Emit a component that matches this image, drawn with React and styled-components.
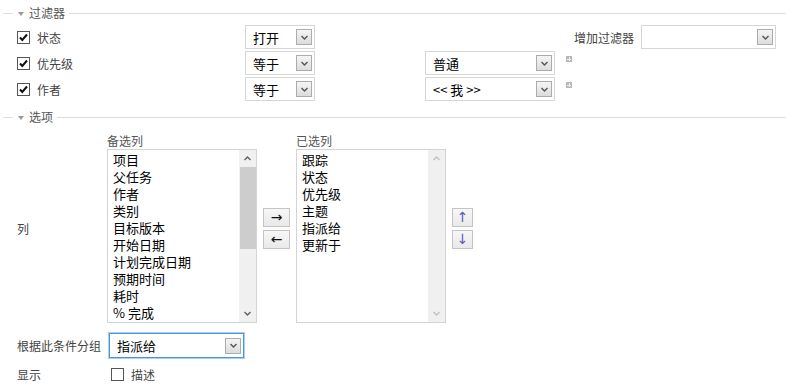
import styled, { createGlobalStyle } from 'styled-components';

const GlobalStyle = createGlobalStyle`
  html, body { margin: 0; padding: 0; background: #fff; }
  body {
    font-family: "Noto Sans CJK SC", "DejaVu Sans", sans-serif;
    font-size: 12px;
    color: #444;
  }
`;

const Page = styled.div`
  width: 786px;
  height: 386px;
  overflow: hidden;
`;

const Legend = styled.div`
  display: flex;
  align-items: center;
  height: 14px;
  margin-top: ${p => p.$top}px;
  padding-left: 3px;
  color: #555;
  line-height: 14px;
  &::before { content: ""; width: 10px; height: 1px; background: #dcdcdc; }
  &::after { content: ""; flex: 1; height: 1px; background: #dcdcdc; margin-left: 4px; }
`;

const Toggle = styled.span`
  width: 0;
  height: 0;
  margin: 1px 5px 0 5px;
  border-left: 3px solid transparent;
  border-right: 3px solid transparent;
  border-top: 4px solid #999;
`;

const FilterRows = styled.div`
  display: flex;
  flex-direction: column;
  gap: 2px;
  margin-top: 5px;
`;

const Row = styled.div`
  display: flex;
  align-items: center;
  height: 24px;
  padding-left: 17px;
`;

const CheckCell = styled.div`
  width: 228px;
  display: flex;
  align-items: center;
  gap: 7px;
`;

const OpCell = styled.div`
  width: 180px;
  display: flex;
`;

const ValueCell = styled.div`
  display: flex;
  align-items: center;
`;

const Box = styled.span`
  width: 13px;
  height: 13px;
  box-sizing: border-box;
  border: 1px solid #555;
  background: #fff;
  display: inline-flex;
  align-items: center;
  justify-content: center;
`;

const CheckBox = ({ checked }) => (
  <Box>
    {checked && (
      <svg width="9" height="9" viewBox="0 0 9 9">
        <path d="M1 4.5 L3.3 7 L8 1.5" fill="none" stroke="#111" strokeWidth="2" />
      </svg>
    )}
  </Box>
);

const SelectBox = styled.div`
  width: ${p => p.$w}px;
  height: ${p => p.$h || 24}px;
  box-sizing: border-box;
  border: 1px solid ${p => (p.$focus ? '#4a95dc' : '#d6d6d6')};
  box-shadow: ${p => (p.$focus ? '0 0 0 1px #a9d0f3' : 'none')};
  background: #fff;
  display: flex;
  align-items: center;
  justify-content: space-between;
  padding: 0 2px 0 7px;
  font-size: 13px;
  color: #000;
`;

const DropBtn = styled.span`
  width: 16px;
  height: 16px;
  box-sizing: border-box;
  border: 1px solid #acacac;
  background: linear-gradient(#f5f5f5, #dcdcdc);
  display: inline-flex;
  align-items: center;
  justify-content: center;
`;

const Chevron = ({ color = '#555', up }) => (
  <svg width="7" height="5" viewBox="0 0 7 5">
    <path d={up ? 'M0.5 4 L3.5 1 L6.5 4' : 'M0.5 1 L3.5 4 L6.5 1'} fill="none" stroke={color} strokeWidth="1.4" />
  </svg>
);

const Select = ({ w, h, focus, children }) => (
  <SelectBox $w={w} $h={h} $focus={focus}>
    <span>{children}</span>
    <DropBtn><Chevron /></DropBtn>
  </SelectBox>
);

const Plus = styled.span`
  width: 6px;
  height: 6px;
  margin-left: 11px;
  margin-top: -8px;
  background: #b8b8b8;
  position: relative;
  &::before { content: ""; position: absolute; left: 1px; top: 2.5px; width: 4px; height: 1px; background: #eee; }
  &::after { content: ""; position: absolute; left: 2.5px; top: 1px; width: 1px; height: 4px; background: #eee; }
`;

const AddFilter = styled.div`
  margin-left: auto;
  margin-right: 10px;
  display: flex;
  align-items: center;
  gap: 7px;
  color: #444;
`;

const ColumnsRow = styled.div`
  display: flex;
  align-items: center;
  padding-left: 17px;
  margin-top: 9px;
`;

const RowLabel = styled.div`
  width: ${p => p.$w || 90}px;
  flex-shrink: 0;
`;

const ListGroup = styled.div`
  display: flex;
  flex-direction: column;
`;

const Caption = styled.div`
  height: 16px;
  line-height: 16px;
  color: #555;
`;

const ListBox = styled.div`
  width: 150px;
  height: 174px;
  box-sizing: border-box;
  border: 1px solid #d4d4d4;
  display: flex;
`;

const Items = styled.div`
  flex: 1;
  padding: 1px 0 0 5px;
  font-size: 13px;
  line-height: 17px;
  color: #000;
`;

const Item = styled.div`
  height: 17px;
`;

const Scrollbar = styled.div`
  width: 17px;
  background: #f0f0f0;
  display: flex;
  flex-direction: column;
`;

const ScrollArrow = styled.div`
  height: 17px;
  display: flex;
  align-items: center;
  justify-content: center;
`;

const Track = styled.div`
  flex: 1;
  display: flex;
  flex-direction: column;
`;

const Thumb = styled.div`
  height: ${p => p.$h}px;
  background: #cdcdcd;
  margin-left: 1px;
`;

const List = ({ items, thumb }) => (
  <ListBox>
    <Items>
      {items.map(i => <Item key={i}>{i}</Item>)}
    </Items>
    <Scrollbar>
      <ScrollArrow><Chevron up color={thumb ? '#606060' : '#c2c2c2'} /></ScrollArrow>
      <Track>{thumb && <Thumb $h={thumb} />}</Track>
      <ScrollArrow><Chevron color={thumb ? '#606060' : '#c2c2c2'} /></ScrollArrow>
    </Scrollbar>
  </ListBox>
);

const BtnColumn = styled.div`
  display: flex;
  flex-direction: column;
  gap: 3px;
  margin: 0 6px;
`;

const MoveBtn = styled.button`
  width: ${p => p.$w}px;
  height: 19px;
  padding: 0;
  box-sizing: border-box;
  border: 1px solid #c4c4c4;
  background: linear-gradient(#f7f7f7, #e9e9e9);
  font-family: "DejaVu Sans", sans-serif;
  font-size: 14px;
  line-height: 16px;
  color: ${p => p.$color || '#111'};
`;

const FormRow = styled.div`
  display: flex;
  align-items: center;
  padding-left: 17px;
  height: ${p => p.$h}px;
  margin-top: ${p => p.$top}px;
`;

const CheckLabel = styled.label`
  display: flex;
  align-items: center;
  gap: 7px;
  margin-left: 4px;
`;

const available = ['项目', '父任务', '作者', '类别', '目标版本', '开始日期', '计划完成日期', '预期时间', '耗时', '% 完成'];
const selected = ['跟踪', '状态', '优先级', '主题', '指派给', '更新于'];

export default function App() {
  return (
    <Page>
      <GlobalStyle />
      <Legend $top={6}><Toggle />过滤器</Legend>
      <FilterRows>
        <Row>
          <CheckCell><CheckBox checked />状态</CheckCell>
          <OpCell><Select w={70}>打开</Select></OpCell>
          <AddFilter>增加过滤器<Select w={135} /></AddFilter>
        </Row>
        <Row>
          <CheckCell><CheckBox checked />优先级</CheckCell>
          <OpCell><Select w={70}>等于</Select></OpCell>
          <ValueCell><Select w={130}>普通</Select><Plus /></ValueCell>
        </Row>
        <Row>
          <CheckCell><CheckBox checked />作者</CheckCell>
          <OpCell><Select w={70}>等于</Select></OpCell>
          <ValueCell><Select w={130}>&lt;&lt; 我 &gt;&gt;</Select><Plus /></ValueCell>
        </Row>
      </FilterRows>

      <Legend $top={9}><Toggle />选项</Legend>
      <ColumnsRow>
        <RowLabel>列</RowLabel>
        <ListGroup>
          <Caption>备选列</Caption>
          <List items={available} thumb={82} />
        </ListGroup>
        <BtnColumn>
          <MoveBtn $w={27}>→</MoveBtn>
          <MoveBtn $w={27}>←</MoveBtn>
        </BtnColumn>
        <ListGroup>
          <Caption>已选列</Caption>
          <List items={selected} />
        </ListGroup>
        <BtnColumn>
          <MoveBtn $w={21} $color="#5b5bb8">↑</MoveBtn>
          <MoveBtn $w={21} $color="#5b5bb8">↓</MoveBtn>
        </BtnColumn>
      </ColumnsRow>

      <FormRow $h={25} $top={10}>
        <RowLabel $w={92}>根据此条件分组</RowLabel>
        <Select w={135} h={25} focus>指派给</Select>
      </FormRow>
      <FormRow $h={16} $top={8}>
        <RowLabel>显示</RowLabel>
        <CheckLabel><CheckBox />描述</CheckLabel>
      </FormRow>
    </Page>
  );
}
